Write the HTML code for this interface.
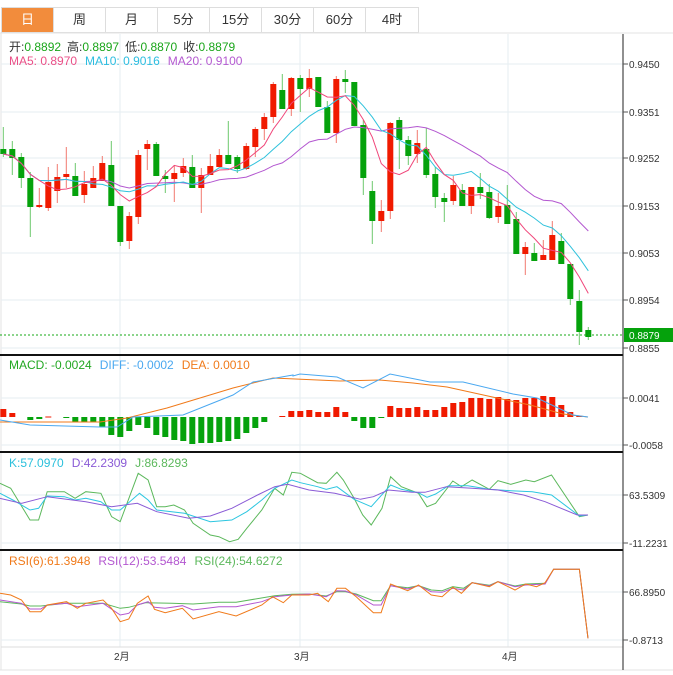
<!DOCTYPE html>
<html><head><meta charset="utf-8"><style>
html,body{margin:0;padding:0;background:#fff;width:673px;height:675px;overflow:hidden;font-family:"Liberation Sans","Noto Sans CJK SC",sans-serif}
.tabs{position:absolute;left:1px;top:7px;height:26px;display:flex;border:1px solid #ddd;box-sizing:border-box}
.tabs div{width:52px;height:24px;line-height:24px;text-align:center;font-size:13px;color:#333;border-right:1px solid #ddd;box-sizing:border-box}
.tabs div.on{background:#f28c3c;color:#fff}
svg{position:absolute;left:0;top:0}
</style></head><body>
<div class="tabs"><div class="on">日</div><div>周</div><div>月</div><div>5分</div><div>15分</div><div>30分</div><div>60分</div><div style="border-right:none">4时</div></div>
<svg id="s" width="673" height="675" xmlns="http://www.w3.org/2000/svg" font-family="Liberation Sans, Noto Sans CJK SC, sans-serif"></svg>
<script>
var s=document.getElementById('s'),o='';
function L(x1,y1,x2,y2,c,w,d){o+='<line x1="'+x1+'" y1="'+y1+'" x2="'+x2+'" y2="'+y2+'" stroke="'+c+'" stroke-width="'+(w||1)+'"'+(d?' stroke-dasharray="'+d+'"':'')+'/>';}
function R(x,y,w,h,c){o+='<rect x="'+x+'" y="'+y+'" width="'+w+'" height="'+Math.max(h,1)+'" fill="'+c+'"/>';}
function T(x,y,t,c,sz){o+='<text x="'+x+'" y="'+y+'" fill="'+c+'" font-size="'+(sz||10)+'">'+t+'</text>';}
function P(pts,c,sx,oy){var d=pts.map(function(p){return (p[0]/sx).toFixed(1)+','+(oy+p[1]/3).toFixed(1)}).join(' ');o+='<polyline points="'+d+'" fill="none" stroke="'+c+'" stroke-width="1"/>';}
var G='#e6edf2';
// frame
L(0,33,673,33,'#e3e3e3');L(1,33,1,670,'#e3e3e3');L(0,670,673,670,'#e3e3e3');
// grids
[64,112,158,206,253,300,348].forEach(function(y){L(1,y,623,y,G)});
[398,445,495,543,592,640].forEach(function(y){L(1,y,623,y,G)});
[120,300,508].forEach(function(x){L(x,34,x,647,G)});
// candles: [green?, bodyTop, bodyBot, wickTop, wickBot]
var C=[[1,149,154,127,157],[1,149,158,141,175],[1,157,178,153,188],[1,178,207,172,237],[0,205,207,188,208],[0,182,208,167,211],[0,177,191,164,203],[0,174,177,147,188],[1,176,196,163,196],[0,184,195,171,203],[0,178,188,166,188],[0,163,181,156,181],[1,165,206,141,206],[1,206,242,206,246],[0,216,241,212,249],[0,155,217,150,224],[0,144,149,140,170],[1,144,176,142,176],[1,176,179,170,193],[0,173,179,165,202],[0,166,173,158,177],[1,167,188,155,188],[0,175,188,168,213],[0,166,175,154,175],[0,155,167,149,167],[1,155,164,121,164],[1,157,169,155,173],[0,146,169,143,170],[0,129,147,127,157],[0,117,129,113,140],[0,84,117,82,123],[1,90,109,74,109],[0,78,109,77,116],[1,78,89,75,112],[0,78,89,69,97],[1,77,107,77,107],[1,107,133,101,133],[0,79,133,76,143],[1,79,82,70,93],[1,82,126,82,126],[1,125,178,120,195],[1,191,221,181,244],[0,211,221,200,232],[0,123,211,122,219],[1,120,140,117,169],[1,140,156,136,165],[0,143,154,130,163],[1,149,175,128,178],[1,174,197,167,208],[1,198,202,193,222],[0,185,201,176,205],[1,190,206,184,206],[0,187,206,187,214],[1,187,193,173,199],[1,192,218,184,219],[0,206,217,193,223],[1,205,224,185,224],[1,219,254,212,254],[0,247,254,242,275],[1,253,261,243,261],[0,255,260,240,260],[0,235,260,221,260],[1,241,264,233,264],[1,264,299,264,305],[1,301,332,290,345],[1,330,337,327,340]];
var RED='#f01a00',GRN='#05a20c';
var closes=[];
C.forEach(function(c,i){var x=3.3+9*i;var col=c[0]?GRN:RED;var wc=c[0]?'#6cc86c':'#f27a70';
L(x.toFixed(1),c[3],x.toFixed(1),c[4],wc);R((x-3).toFixed(1),c[1],6,c[2]-c[1],col);closes.push(c[0]?c[2]:c[1]);});
function MA(n,col){var p=[];for(var i=0;i<closes.length;i++){var a=Math.max(0,i-n+1),sm=0;for(var j=a;j<=i;j++)sm+=closes[j];p.push((3.3+9*i).toFixed(1)+','+(sm/(i-a+1)).toFixed(1));}
o+='<polyline points="'+p.join(' ')+'" fill="none" stroke="'+col+'" stroke-width="1"/>';}
MA(20,'#b357d0');MA(10,'#2fc2dc');MA(5,'#f0467a');
L(0,335,623,335,'#17a917',1,'2,2');
// legends main
o+='<text y="51" font-size="12"><tspan x="9" fill="#333">开:</tspan><tspan fill="#1aa51a">0.8892</tspan><tspan fill="#333" dx="6">高:</tspan><tspan fill="#1aa51a">0.8897</tspan><tspan fill="#333" dx="6">低:</tspan><tspan fill="#1aa51a">0.8870</tspan><tspan fill="#333" dx="6">收:</tspan><tspan fill="#1aa51a">0.8879</tspan></text>';
o+='<text y="65" font-size="12"><tspan x="9" fill="#ea4f87">MA5: 0.8970</tspan><tspan dx="8" fill="#2cbde0">MA10: 0.9016</tspan><tspan dx="8" fill="#b45ad0">MA20: 0.9100</tspan></text>';
// MACD
var M=[8,4,0,-3,-2,0.5,0,-1,-5,-5,-5,-10,-18,-20,-14,-8,-11,-18,-20,-23,-24,-27,-26,-26,-25,-24,-22,-16,-11,-5,0,1,6,6,7,5,5,10,5,-4,-11,-11,-1,11,9,9,10,7,7,10,14,15,19,19,18,20,18,17,19,19,21,20,12,5,1,0];
M.forEach(function(v,i){var x=3.3+9*i-3;if(v>0)R(x.toFixed(1),417-v,6,v,RED);else if(v<0)R(x.toFixed(1),417,6,-v,GRN);});
o+='<polyline fill="none" stroke="#f07a1a" points="0,422 100,422 127,418 167,408 233,388 273,378 340,381 380,380 413,383 447,387 497,398 530,405 563,414 588,417"/>';
o+='<polyline fill="none" stroke="#4aa8f0" points="0,420 30,425 100,427 117,427 133,417 183,415 233,395 253,382 293,375 293,376 300,374 337,377 363,388 390,374 430,382 463,382 513,394 537,398 573,415 588,417"/>';
o+='<text y="369" font-size="12"><tspan x="9" fill="#22a722">MACD: -0.0024</tspan><tspan dx="8" fill="#4aa8f0">DIFF: -0.0002</tspan><tspan dx="8" fill="#f07a1a">DEA: 0.0010</tspan></text>';
// KDJ
var sx=2.33;
P([[0,130],[25,145],[70,240],[90,240],[110,155],[150,155],[175,175],[200,155],[235,160],[260,230],[280,245],[322,100],[345,120],[365,200],[385,200],[405,195],[430,210],[450,250],[490,285],[510,290],[535,305],[555,298],[575,265],[610,210],[640,145],[660,165],[680,97],[700,100],[740,128],[760,130],[785,97],[800,120],[825,175],[845,225],[865,255],[890,205],[910,110],[935,140],[975,160],[995,200],[1015,190],[1055,123],[1075,140],[1100,120],[1140,148],[1160,122],[1190,133],[1225,120],[1245,125],[1285,105],[1350,230],[1370,225]],'#5cb85c',sx,440);
P([[0,160],[30,180],[70,210],[90,205],[110,168],[150,170],[175,180],[200,175],[235,185],[260,210],[280,210],[325,160],[345,180],[365,210],[430,220],[490,245],[540,240],[575,215],[610,180],[640,145],[680,120],[700,128],[740,140],[760,148],[785,140],[825,178],[865,200],[910,135],[935,148],[975,158],[995,172],[1015,162],[1045,137],[1090,137],[1140,148],[1190,152],[1240,155],[1285,165],[1350,228],[1370,225]],'#2cc6e0',sx,440);
P([[0,175],[50,190],[110,170],[200,185],[260,200],[320,190],[365,215],[440,235],[490,228],[540,205],[600,165],[640,140],[670,133],[720,150],[780,160],[840,178],[870,170],[905,150],[960,157],[990,157],[1040,140],[1100,145],[1160,150],[1220,165],[1270,185],[1345,225],[1370,225]],'#8a5bd6',sx,440);
o+='<text y="467" font-size="12"><tspan x="9" fill="#2cc0dc">K:57.0970</tspan><tspan dx="8" fill="#8a5bd6">D:42.2309</tspan><tspan dx="8" fill="#5cb85c">J:86.8293</tspan></text>';
// RSI
P([[0,485],[50,492],[70,498],[95,498],[155,490],[240,490],[280,505],[300,502],[340,488],[400,490],[450,492],[510,487],[550,487],[640,467],[680,463],[720,462],[760,468],[785,455],[805,455],[830,462],[870,482],[888,482],[910,437],[950,443],[975,437],[1005,450],[1030,452],[1055,440],[1080,445],[1100,428],[1140,436],[1160,425],[1200,438],[1225,432],[1270,430],[1290,388],[1350,388],[1370,595]],'#5cb85c',sx,440);
P([[0,480],[50,490],[70,507],[95,507],[110,495],[155,490],[180,500],[240,490],[280,525],[300,520],[320,495],[345,485],[360,502],[385,505],[425,497],[450,510],[510,500],[550,500],[610,485],[640,470],[680,465],[720,462],[760,470],[785,452],[805,453],[830,465],[870,495],[888,495],[910,437],[950,447],[975,437],[1005,455],[1030,457],[1055,445],[1080,450],[1100,428],[1140,438],[1160,425],[1200,440],[1225,435],[1270,432],[1290,388],[1350,388],[1370,595]],'#b357d0',sx,440);
P([[0,460],[25,465],[50,480],[70,515],[95,515],[110,495],[155,485],[180,505],[200,490],[240,480],[260,505],[280,545],[300,537],[320,490],[345,468],[360,508],[385,518],[425,505],[450,537],[510,515],[550,528],[610,495],[635,470],[660,488],[680,465],[720,465],[740,460],[765,485],[785,445],[805,445],[830,470],[870,518],[888,518],[910,432],[950,452],[975,435],[1005,465],[1030,470],[1055,442],[1075,460],[1100,428],[1140,440],[1160,425],[1200,450],[1225,432],[1250,440],[1270,428],[1290,388],[1350,388],[1370,595]],'#f07a1a',sx,440);
o+='<text y="565" font-size="12"><tspan x="9" fill="#f07a1a">RSI(6):61.3948</tspan><tspan dx="8" fill="#b357d0">RSI(12):53.5484</tspan><tspan dx="8" fill="#5cb85c">RSI(24):54.6272</tspan></text>';
// separators & axis
[355,452,550].forEach(function(y){L(0,y,623,y,'#111',2)});
L(1,647,623,647,'#ddd');
L(623,34,623,670,'#222');
[[64,'0.9450'],[112,'0.9351'],[158,'0.9252'],[206,'0.9153'],[253,'0.9053'],[300,'0.8954'],[348,'0.8855'],[398,'0.0041'],[445,'-0.0058'],[495,'63.5309'],[543,'-11.2231'],[592,'66.8950'],[640,'-0.8713']].forEach(function(a){L(623,a[0],628,a[0],'#555');T(629,a[0]+4,a[1],'#333',10);});
R(624,328,49,14,'#05a20c');T(629,339,'0.8879','#fff',10);
T(114,660,'2月','#333',10);T(294,660,'3月','#333',10);T(502,660,'4月','#333',10);
s.innerHTML=o;
</script>
</body></html>
